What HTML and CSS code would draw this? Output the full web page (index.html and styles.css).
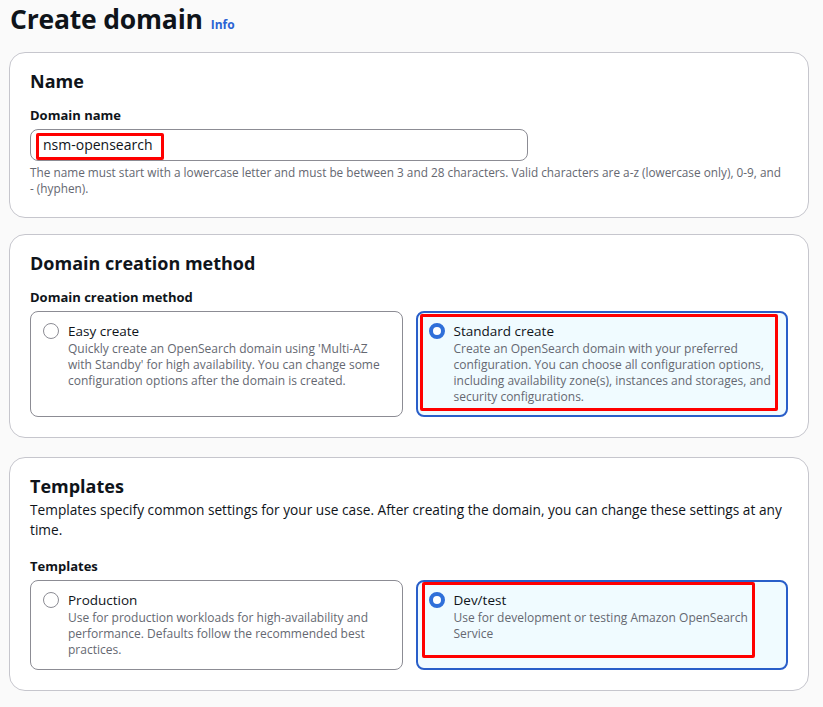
FILE: index.html
```html
<!DOCTYPE html>
<html lang="en">
<head>
<meta charset="utf-8">
<title>Create domain</title>
<link rel="stylesheet" href="styles.css">
</head>
<body>
<main class="page">
  <header class="page-header">
    <h1 class="page-title">Create domain</h1>
    <a class="info-link" href="#">Info</a>
  </header>

  <section class="card card-name">
    <h2 class="card-title">Name</h2>
    <div class="field">
      <label class="field-label" for="dn">Domain name</label>
      <div class="input-wrap">
        <div class="input" id="dn">nsm-opensearch</div>
        <span class="mark mark-input"></span>
      </div>
      <p class="hint">The name must start with a lowercase letter and must be between 3 and 28 characters. Valid characters are a-z (lowercase only), 0-9, and - (hyphen).</p>
    </div>
  </section>

  <section class="card card-method">
    <h2 class="card-title">Domain creation method</h2>
    <div class="field">
      <div class="field-label">Domain creation method</div>
      <div class="tiles tiles-method">
        <div class="tile">
          <span class="radio"></span>
          <div class="tile-body">
            <div class="tile-title">Easy create</div>
            <div class="tile-desc">Quickly create an OpenSearch domain using 'Multi-AZ with Standby' for high availability. You can change some configuration options after the domain is created.</div>
          </div>
        </div>
        <div class="tile tile-selected">
          <span class="radio radio-on"></span>
          <div class="tile-body">
            <div class="tile-title">Standard create</div>
            <div class="tile-desc">Create an OpenSearch domain with your preferred configuration. You can choose all configuration options, including availability zone(s), instances and storages, and security configurations.</div>
          </div>
          <span class="mark mark-standard"></span>
        </div>
      </div>
    </div>
  </section>

  <section class="card card-templates">
    <h2 class="card-title">Templates</h2>
    <p class="card-desc">Templates specify common settings for your use case. After creating the domain, you can change these settings at any time.</p>
    <div class="field field-spaced">
      <div class="field-label">Templates</div>
      <div class="tiles tiles-templates">
        <div class="tile">
          <span class="radio"></span>
          <div class="tile-body">
            <div class="tile-title">Production</div>
            <div class="tile-desc">Use for production workloads for high-availability and performance. Defaults follow the recommended best practices.</div>
          </div>
        </div>
        <div class="tile tile-selected">
          <span class="radio radio-on"></span>
          <div class="tile-body">
            <div class="tile-title">Dev/test</div>
            <div class="tile-desc">Use for development or testing Amazon OpenSearch Service</div>
          </div>
          <span class="mark mark-dev"></span>
        </div>
      </div>
    </div>
  </section>
</main>
</body>
</html>
```

FILE: styles.css
```css
* { box-sizing: border-box; }

html, body {
  margin: 0;
  padding: 0;
  background: #fafafa;
}

body {
  font-family: "Open Sans", "Noto Sans", sans-serif;
  color: #0f141a;
}

.page {
  width: 800px;
  margin-left: 9px;
}

.page-header {
  display: flex;
  align-items: baseline;
  gap: 8px;
  height: 52px;
  padding-left: 1px;
}

.page-title {
  margin: 0;
  font-size: 26.5px;
  line-height: 38px;
  font-weight: 700;
  letter-spacing: -0.2px;
}

.info-link {
  color: #2a63d4;
  font-size: 12px;
  font-weight: 700;
  text-decoration: none;
}

.card {
  background: #ffffff;
  border: 1px solid #c6c6cd;
  border-radius: 16px;
  padding: 15px 20px 20px;
}

.card-name {
  padding-bottom: 21px;
  margin-bottom: 16px;
}

.card-method {
  margin-bottom: 19px;
}

.card-title {
  margin: 0;
  font-size: 18px;
  line-height: 26px;
  font-weight: 700;
}

.card-desc {
  margin: 1px 0 0;
  font-size: 13.7px;
  line-height: 20px;
  color: #0f141a;
}

.field {
  margin-top: 11px;
}

.field-spaced {
  margin-top: 16px;
}

.field-label {
  display: block;
  font-size: 13px;
  font-weight: 700;
  line-height: 20px;
  margin-bottom: 4px;
}

.input-wrap {
  position: relative;
  width: 498px;
}

.input {
  height: 32px;
  border: 1px solid #8c8c94;
  border-radius: 8px;
  background: #fff;
  padding: 0 12px;
  font-size: 14px;
  line-height: 30px;
}

.hint {
  margin: 3px 0 0;
  padding-right: 4px;
  font-size: 11.8px;
  line-height: 16px;
  color: #656871;
}

.tiles {
  display: grid;
  grid-template-columns: 1fr 1fr;
  gap: 13px;
}

.tile {
  position: relative;
  display: flex;
  gap: 9px;
  border: 1px solid #8c8c94;
  border-radius: 8px;
  background: #fff;
  padding: 9px 12px 12px;
}

.tiles-method .tile { height: 106px; }
.tiles-templates .tile { height: 90px; }

.tile-selected {
  border: 2px solid #295ec9;
  background: #f0fbff;
  padding: 8px 11px 11px;
}

.radio {
  flex: none;
  width: 16px;
  height: 16px;
  margin-top: 2px;
  border-radius: 50%;
  border: 1.5px solid #8c8c94;
  background: #fff;
}

.radio-on {
  border: 4.5px solid #2f6fd9;
}

.tile-title {
  font-size: 13.5px;
  line-height: 20px;
}

.tile-desc {
  font-size: 12px;
  line-height: 16px;
  color: #656871;
}

.mark {
  position: absolute;
  border: 3px solid #ff0000;
  border-radius: 2px;
  pointer-events: none;
}

.mark-input {
  left: 6px;
  top: 4px;
  width: 128px;
  height: 27px;
}

.mark-standard {
  left: 2px;
  top: 1px;
  width: 358px;
  height: 97px;
}

.mark-dev {
  left: 4px;
  top: 0;
  width: 333px;
  height: 76px;
}
```
